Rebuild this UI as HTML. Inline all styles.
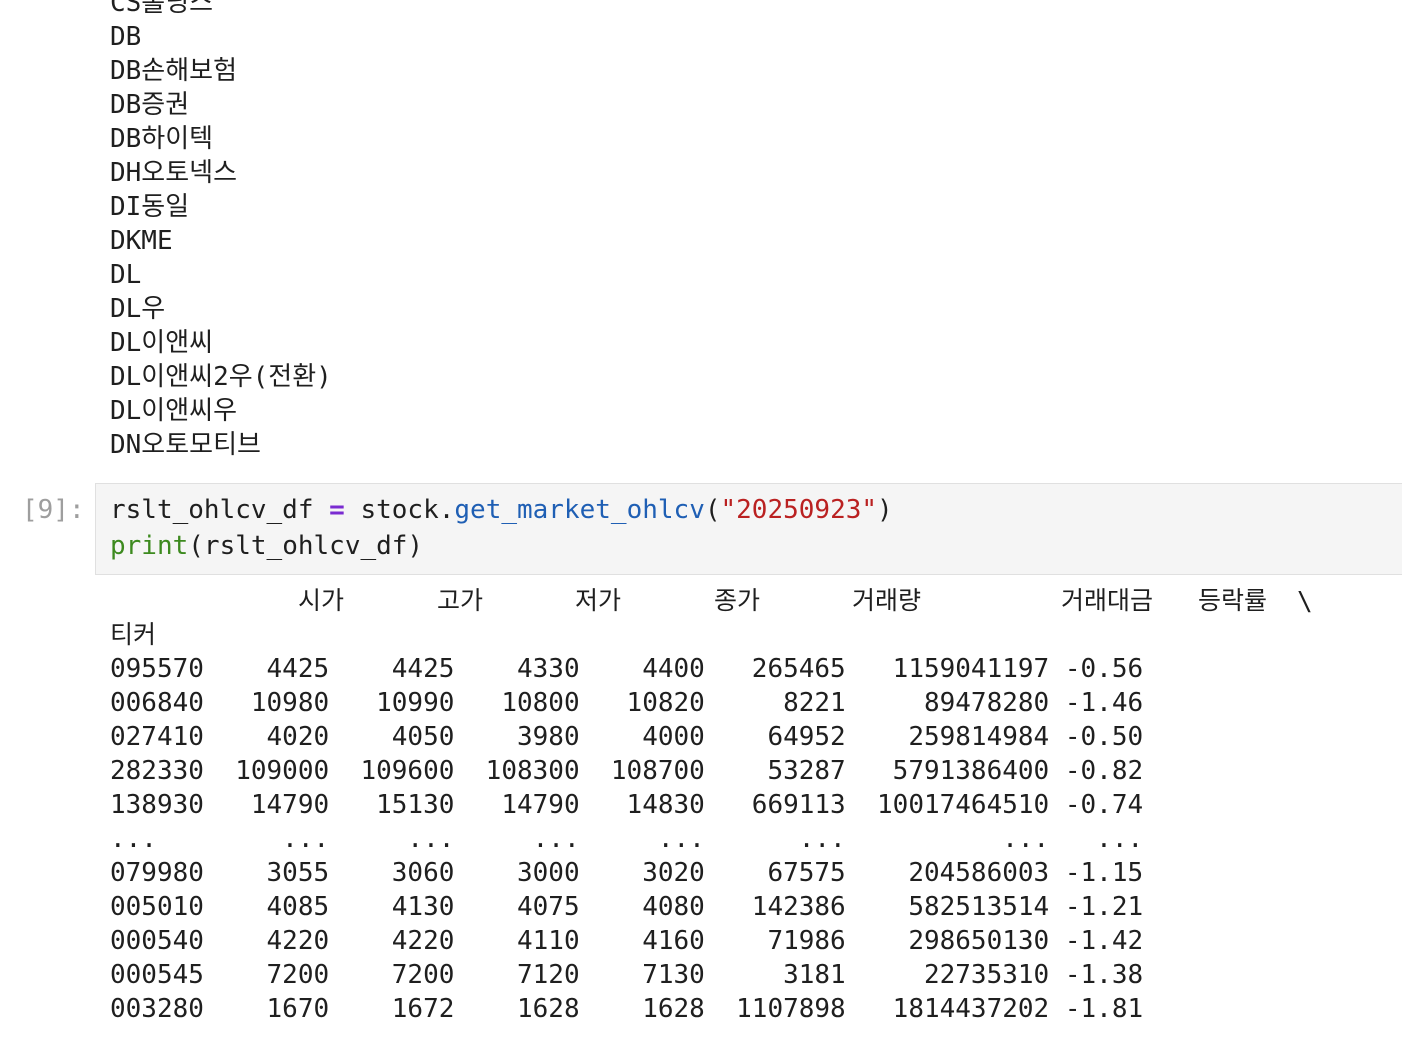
<!DOCTYPE html>
<html><head><meta charset="utf-8"><style>
html,body{margin:0;padding:0;background:#fff;width:1402px;height:1058px;overflow:hidden;position:relative}
.l{position:absolute;left:110px;white-space:pre;font-family:"DejaVu Sans Mono","Liberation Mono","Noto Sans CJK KR",monospace;font-size:26px;line-height:34px;height:34px;color:#1f1f1f}
.h{position:absolute;white-space:pre;font-family:"DejaVu Sans","Noto Sans CJK KR",sans-serif;font-size:25px;line-height:34px;color:#1f1f1f}
.box{position:absolute;left:95px;top:483px;width:1320px;height:90px;background:#f5f5f5;border:1px solid #e0e0e0}
.p{position:absolute;left:22px;top:493px;font-family:"DejaVu Sans Mono",monospace;font-size:26px;line-height:34px;color:#9e9e9e}
.g{color:#008000;color:#3d8a1f}.b{color:#1f5fb4}.s{color:#ba2121}.o{color:#7a2bd1;font-weight:bold}
</style></head><body>
<div class="l" style="top:-14px">CS홀딩스</div>
<div class="l" style="top:20px">DB</div>
<div class="l" style="top:54px">DB손해보험</div>
<div class="l" style="top:88px">DB증권</div>
<div class="l" style="top:122px">DB하이텍</div>
<div class="l" style="top:156px">DH오토넥스</div>
<div class="l" style="top:190px">DI동일</div>
<div class="l" style="top:224px">DKME</div>
<div class="l" style="top:258px">DL</div>
<div class="l" style="top:292px">DL우</div>
<div class="l" style="top:326px">DL이앤씨</div>
<div class="l" style="top:360px">DL이앤씨2우(전환)</div>
<div class="l" style="top:394px">DL이앤씨우</div>
<div class="l" style="top:428px">DN오토모티브</div>
<div class="box"></div>
<div class="p">[9]:</div>
<div class="l" style="top:493px">rslt_ohlcv_df <span class="o">=</span> stock.<span class="b">get_market_ohlcv</span>(<span class="s">"20250923"</span>)</div>
<div class="l" style="top:529px"><span class="g">print</span>(rslt_ohlcv_df)</div>
<div class="h" style="top:584px;left:298px">시가</div>
<div class="h" style="top:584px;left:437px">고가</div>
<div class="h" style="top:584px;left:575px">저가</div>
<div class="h" style="top:584px;left:714px">종가</div>
<div class="h" style="top:584px;left:852px">거래량</div>
<div class="h" style="top:584px;left:1061px">거래대금</div>
<div class="h" style="top:584px;left:1198px">등락률</div>
<div class="l" style="top:585px;left:1297px">\</div>
<div class="h" style="top:618px;left:110px">티커</div>
<div class="l" style="top:652px">095570    4425    4425    4330    4400   265465   1159041197 -0.56</div>
<div class="l" style="top:686px">006840   10980   10990   10800   10820     8221     89478280 -1.46</div>
<div class="l" style="top:720px">027410    4020    4050    3980    4000    64952    259814984 -0.50</div>
<div class="l" style="top:754px">282330  109000  109600  108300  108700    53287   5791386400 -0.82</div>
<div class="l" style="top:788px">138930   14790   15130   14790   14830   669113  10017464510 -0.74</div>
<div class="l" style="top:822px">...        ...     ...     ...     ...      ...          ...   ...</div>
<div class="l" style="top:856px">079980    3055    3060    3000    3020    67575    204586003 -1.15</div>
<div class="l" style="top:890px">005010    4085    4130    4075    4080   142386    582513514 -1.21</div>
<div class="l" style="top:924px">000540    4220    4220    4110    4160    71986    298650130 -1.42</div>
<div class="l" style="top:958px">000545    7200    7200    7120    7130     3181     22735310 -1.38</div>
<div class="l" style="top:992px">003280    1670    1672    1628    1628  1107898   1814437202 -1.81</div>
</body></html>
